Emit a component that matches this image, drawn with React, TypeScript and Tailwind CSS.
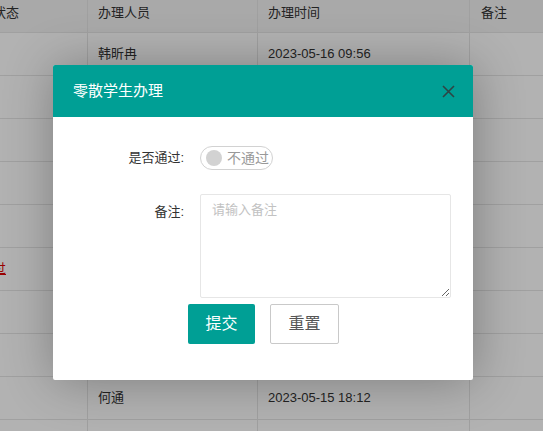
const rows = [
  { name: '韩昕冉', time: '2023-05-16 09:56', status: '' },
  { name: '', time: '', status: '' },
  { name: '', time: '', status: '' },
  { name: '', time: '', status: '' },
  { name: '', time: '', status: '' },
  { name: '', time: '', status: '未通过' },
  { name: '', time: '', status: '' },
  { name: '', time: '', status: '' },
  { name: '何通', time: '2023-05-15 18:12', status: '' },
  { name: '', time: '', status: '' },
];

export default function App() {
  return (
    <div className="relative w-[543px] h-[431px] overflow-hidden bg-white text-[#333] font-['Liberation_Sans','Noto_Sans_CJK_SC',sans-serif]">
      {/* 表格 */}
      <div className="text-[13px]">
        <div className="flex h-[33px] bg-[#f2f2f2] border-b border-[#e6e6e6] leading-[26px]">
          <div className="w-[88px] shrink-0 border-r border-[#e6e6e6] overflow-hidden">
            <span className="inline-block -ml-[7px]">状态</span>
          </div>
          <div className="w-[170px] shrink-0 border-r border-[#e6e6e6] pl-[10px]">办理人员</div>
          <div className="w-[212px] shrink-0 border-r border-[#e6e6e6] pl-[10px]">办理时间</div>
          <div className="flex-1 pl-[11px]">备注</div>
        </div>
        {rows.map((r, i) => (
          <div key={i} className="flex h-[43px] border-b border-[#e6e6e6] items-center">
            <div className="w-[88px] h-full shrink-0 border-r border-[#e6e6e6] overflow-hidden flex items-center">
              {r.status && (
                <span className="inline-block shrink-0 -ml-[33px] text-[#d00] underline">{r.status}</span>
              )}
            </div>
            <div className="w-[170px] h-full shrink-0 border-r border-[#e6e6e6] pl-[10px] flex items-center">{r.name}</div>
            <div className="w-[212px] h-full shrink-0 border-r border-[#e6e6e6] pl-[10px] flex items-center">{r.time}</div>
            <div className="flex-1 h-full" />
          </div>
        ))}
      </div>

      {/* 遮罩 */}
      <div className="absolute inset-0 bg-black/30" />

      {/* 弹窗 */}
      <div className="absolute left-[53px] top-[65px] w-[420px] h-[315px] bg-white rounded-[2px] shadow-[1px_1px_50px_rgba(0,0,0,0.3)]">
        <div className="h-[52px] bg-[#009f95] rounded-t-[2px] flex items-center justify-between pl-[20px] pr-[18px]">
          <span className="text-white text-[15px]">零散学生办理</span>
          <svg width="13" height="13" viewBox="0 0 13 13">
            <path d="M1 1 L12 12 M12 1 L1 12" stroke="#2e4444" strokeWidth="1.6" />
          </svg>
        </div>

        <div className="pt-[22px] text-[13px]">
          <div className="flex items-center h-[38px]">
            <label className="w-[131px] text-right">是否通过:</label>
            <div className="ml-[16px] w-[73px] h-[24px] border border-[#d2d2d2] rounded-full flex items-center pl-[5px]">
              <span className="w-[16px] h-[16px] rounded-full bg-[#d2d2d2] shrink-0" />
              <span className="ml-[5px] text-[14px] text-[#999] leading-none">不通过</span>
            </div>
          </div>

          <div className="flex items-start mt-[17px]">
            <label className="w-[131px] text-right leading-[36px]">备注:</label>
            <textarea
              placeholder="请输入备注"
              className="ml-[16px] w-[251px] h-[104px] border border-[#e6e6e6] rounded-[2px] pl-[11px] pt-[5px] leading-[20px] text-[13px] outline-none placeholder:text-[#c2c2c2]"
            />
          </div>

          <div className="flex mt-[6px] ml-[135px] gap-[15px]">
            <button className="w-[67px] h-[40px] bg-[#009f95] text-white text-[16px] rounded-[2px]">提交</button>
            <button className="w-[69px] h-[40px] bg-white border border-[#c9c9c9] text-[#555] text-[16px] rounded-[2px]">重置</button>
          </div>
        </div>
      </div>
    </div>
  );
}
